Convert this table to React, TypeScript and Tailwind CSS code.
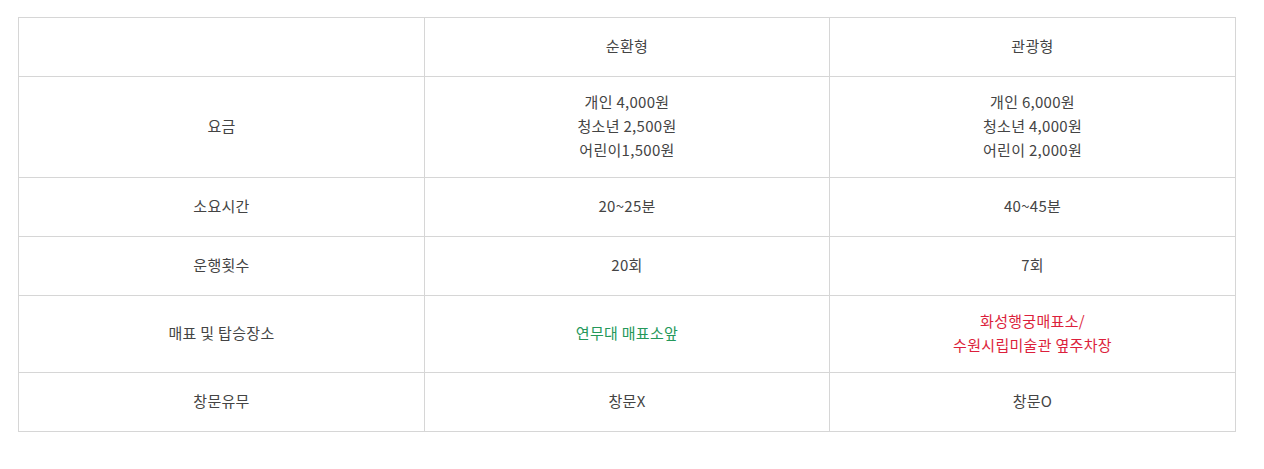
import React from "react";

type Row = { label: string; h: string; a: React.ReactNode; b: React.ReactNode };

const rows: Row[] = [
  { label: "", h: "h-[59px]", a: "순환형", b: "관광형" },
  {
    label: "요금",
    h: "h-[101px]",
    a: (
      <>
        개인 4,000원
        <br />
        청소년 2,500원
        <br />
        어린이1,500원
      </>
    ),
    b: (
      <>
        개인 6,000원
        <br />
        청소년 4,000원
        <br />
        어린이 2,000원
      </>
    ),
  },
  { label: "소요시간", h: "h-[59px]", a: "20~25분", b: "40~45분" },
  { label: "운행횟수", h: "h-[59px]", a: "20회", b: "7회" },
  {
    label: "매표 및 탑승장소",
    h: "h-[77px]",
    a: <span className="text-[#25985a]">연무대 매표소앞</span>,
    b: (
      <span className="text-[#dc1f3c]">
        화성행궁매표소/
        <br />
        수원시립미술관 옆주차장
      </span>
    ),
  },
  { label: "창문유무", h: "h-[59px]", a: "창문X", b: "창문O" },
];

const Cell = ({ h, children }: { h: string; children?: React.ReactNode }) => (
  <div className={`${h} flex items-center justify-center border-r border-b border-[#d6d6d6] pb-[2px] text-center`}>
    <div className="leading-6">{children}</div>
  </div>
);

export default function App() {
  return (
    <div className="min-h-[469px] bg-white pt-[17px] pl-[18px] text-[15px] tracking-[0.3px] text-[#444] [font-family:'Malgun_Gothic','Noto_Sans_CJK_KR',sans-serif]">
      <div className="grid w-[1218px] grid-cols-[406px_405px_406px] border-t border-l border-[#d6d6d6]">
        {rows.map((r, i) => (
          <React.Fragment key={i}>
            <Cell h={r.h}>{r.label}</Cell>
            <Cell h={r.h}>{r.a}</Cell>
            <Cell h={r.h}>{r.b}</Cell>
          </React.Fragment>
        ))}
      </div>
    </div>
  );
}
